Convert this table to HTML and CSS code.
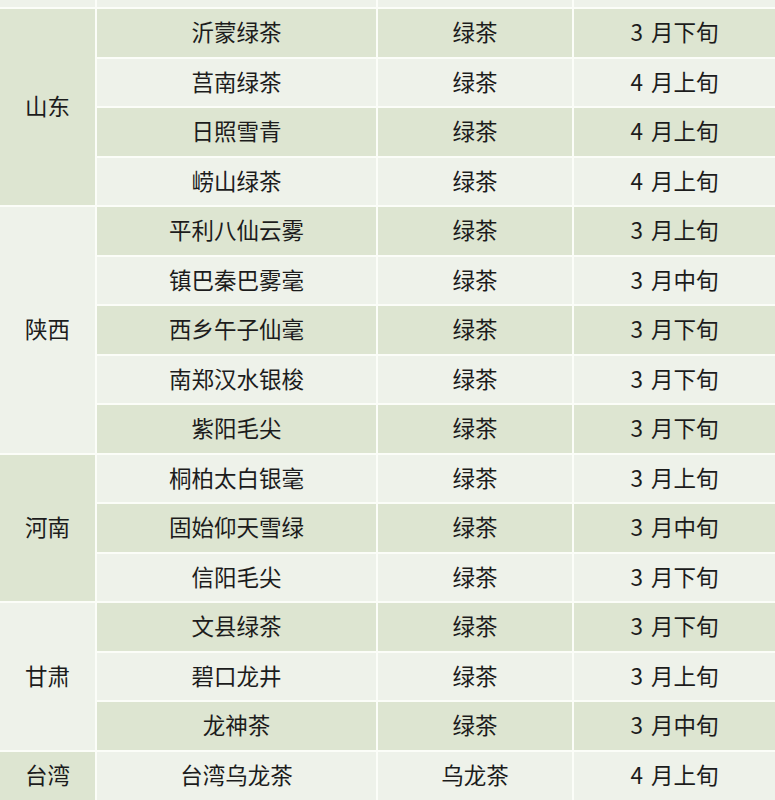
FILE: index.html
```
<!DOCTYPE html>
<html lang="zh">
<head>
<meta charset="utf-8">
<link rel="stylesheet" href="styles.css">
</head>
<body>
<div class="grid">
  <div class="c l"></div><div class="c l"></div><div class="c l"></div><div class="c l"></div>

  <div class="c d s4">山东</div>
  <div class="c d">沂蒙绿茶</div><div class="c d">绿茶</div><div class="c d t">3 月下旬</div>
  <div class="c l">莒南绿茶</div><div class="c l">绿茶</div><div class="c l t">4 月上旬</div>
  <div class="c d">日照雪青</div><div class="c d">绿茶</div><div class="c d t">4 月上旬</div>
  <div class="c l">崂山绿茶</div><div class="c l">绿茶</div><div class="c l t">4 月上旬</div>

  <div class="c l s5">陕西</div>
  <div class="c d">平利八仙云雾</div><div class="c d">绿茶</div><div class="c d t">3 月上旬</div>
  <div class="c l">镇巴秦巴雾毫</div><div class="c l">绿茶</div><div class="c l t">3 月中旬</div>
  <div class="c d">西乡午子仙毫</div><div class="c d">绿茶</div><div class="c d t">3 月下旬</div>
  <div class="c l">南郑汉水银梭</div><div class="c l">绿茶</div><div class="c l t">3 月下旬</div>
  <div class="c d">紫阳毛尖</div><div class="c d">绿茶</div><div class="c d t">3 月下旬</div>

  <div class="c d s3">河南</div>
  <div class="c l">桐柏太白银毫</div><div class="c l">绿茶</div><div class="c l t">3 月上旬</div>
  <div class="c d">固始仰天雪绿</div><div class="c d">绿茶</div><div class="c d t">3 月中旬</div>
  <div class="c l">信阳毛尖</div><div class="c l">绿茶</div><div class="c l t">3 月下旬</div>

  <div class="c l s3">甘肃</div>
  <div class="c d">文县绿茶</div><div class="c d">绿茶</div><div class="c d t">3 月下旬</div>
  <div class="c l">碧口龙井</div><div class="c l">绿茶</div><div class="c l t">3 月上旬</div>
  <div class="c d">龙神茶</div><div class="c d">绿茶</div><div class="c d t">3 月中旬</div>

  <div class="c d">台湾</div>
  <div class="c l">台湾乌龙茶</div><div class="c l">乌龙茶</div><div class="c l t">4 月上旬</div>
</div>
</body>
</html>
```
FILE: styles.css
```
html, body {
  margin: 0;
  padding: 0;
  background: #ffffff;
}
.grid {
  width: 775px;
  height: 800px;
  display: grid;
  grid-template-columns: 95px 279px 194px 1fr;
  grid-template-rows: 7px repeat(15, 47.5px) 1fr;
  gap: 2px;
  background: #fbfdf8;
  overflow: hidden;
  font-family: "Noto Sans CJK SC", "Noto Sans", sans-serif;
  font-size: 22.5px;
  line-height: 1;
  color: #1c1c1c;
}
.c {
  display: flex;
  align-items: center;
  justify-content: center;
  white-space: pre;
  padding-bottom: 3px;
}
.t { word-spacing: 3px; }
.d { background: #dde5d1; }
.l { background: #eef2ea; }
.s3 { grid-row: span 3; }
.s4 { grid-row: span 4; }
.s5 { grid-row: span 5; }
```
